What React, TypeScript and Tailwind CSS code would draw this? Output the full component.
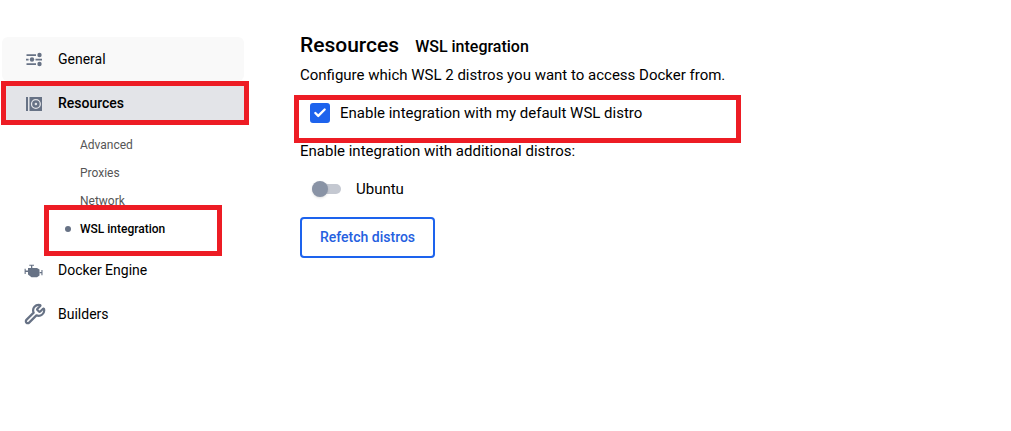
import React, { useState } from 'react';
import { Check, Wrench } from 'lucide-react';

const SlidersIcon = () => (
  <svg className="h-5 w-5" viewBox="0 0 20 20" fill="currentColor" aria-hidden="true">
    <path d="M2.5 5.2h9.5v1.7H2.5zM2 9.7h2.6v1.7H2zM11.5 9.7H18v1.7h-6.5zM2.5 14.2h9.5v1.7H2.5z" />
    <circle cx="15.5" cy="6" r="2.2" />
    <circle cx="8" cy="10.5" r="2.2" />
    <circle cx="15.5" cy="15" r="2.2" />
  </svg>
);

const DiskIcon = () => (
  <svg className="h-5 w-5" viewBox="0 0 20 20" fill="none" aria-hidden="true">
    <path d="M2 4h2v14H2zM5.5 4H18v14H5.5z" fill="currentColor" />
    <circle cx="11.9" cy="11" r="4.4" stroke="#e3e4e8" strokeWidth="1.3" />
    <circle cx="11.9" cy="11" r="1.3" fill="#e3e4e8" />
  </svg>
);

const EngineIcon = () => (
  <svg className="h-5 w-5" viewBox="0 0 20 20" fill="currentColor" aria-hidden="true">
    <path d="M4 8h9l2.5 1.5v6L13 17.2H7.5L4 14.5z" />
    <path d="M5.3 4.7H10v1.1H8.3V8H7V5.8H5.3zM.6 8.7h1.1v5.2H.6zM1.7 10.6H4v1.3H1.7zM17.4 10h1.1v5.2h-1.1zM15.5 12h1.9v1.3h-1.9z" />
  </svg>
);

const subItems = ['Advanced', 'Proxies', 'Network', 'WSL integration'];

const navLink = 'flex h-11 items-center gap-3 pl-[22px] text-[14px] text-black';

const Highlight: React.FC<{ className: string }> = ({ className }) => (
  <span className={`pointer-events-none absolute border-5 border-[#ed1c24] ${className}`} />
);

const Sidebar: React.FC = () => (
  <nav className="w-[244px] shrink-0 pt-0.5 pl-0.5">
    <ul>
      <li>
        <a href="#general" className={`${navLink} rounded-md bg-[#f9f9f9]`}>
          <span className="flex w-[22px] text-[#677285]"><SlidersIcon /></span>
          General
        </a>
      </li>
      <li>
        <div className="relative">
          <a href="#resources" className={`${navLink} bg-[#e3e4e8] font-medium`}>
            <span className="flex w-[22px] text-[#677285]"><DiskIcon /></span>
            Resources
          </a>
          <Highlight className="inset-y-0 -left-px -right-[5px]" />
        </div>
        <ul className="pt-1.5 pb-[5px]">
          {subItems.map((item) => {
            const active = item === 'WSL integration';
            return (
              <li key={item} className="relative">
                <a
                  href="#resources"
                  className={`flex h-7 items-center pl-[63px] text-[12px] ${active ? 'font-medium text-black' : 'text-[#555]'}`}
                >
                  <span className={`mr-[9px] h-1.5 w-1.5 rounded-full ${active ? 'bg-[#677285]' : ''}`} />
                  {item}
                </a>
                {active && <Highlight className="-top-2.5 -bottom-[13px] left-[42px] right-[22px]" />}
              </li>
            );
          })}
        </ul>
      </li>
      <li>
        <a href="#engine" className={navLink}>
          <span className="flex w-[22px] text-[#677285]"><EngineIcon /></span>
          Docker Engine
        </a>
      </li>
      <li>
        <a href="#builders" className={navLink}>
          <span className="flex w-[22px] text-[#677285]"><Wrench size={22} strokeWidth={2.4} /></span>
          Builders
        </a>
      </li>
    </ul>
  </nav>
);

const App: React.FC = () => {
  const [defaultDistro, setDefaultDistro] = useState(true);
  const [ubuntu, setUbuntu] = useState(false);

  return (
    <div className="flex min-h-screen bg-white pt-[35px] font-['Roboto',sans-serif] text-black">
      <Sidebar />

      <main className="min-w-0 flex-1 pl-14 text-[15px] leading-5">
        <div className="flex items-baseline gap-4">
          <h1 className="-mt-1 text-[21px] leading-6 font-medium">Resources</h1>
          <h2 className="text-[16px] leading-6 font-medium">WSL integration</h2>
        </div>
        <p className="mt-1.5">Configure which WSL 2 distros you want to access Docker from.</p>

        <div className="relative mt-[18px] max-w-[435px]">
          <label className="flex items-center gap-2.5 pl-2.5">
            <span className="relative flex">
              <input
                type="checkbox"
                checked={defaultDistro}
                onChange={(e) => setDefaultDistro(e.target.checked)}
                className="h-5 w-5 appearance-none rounded-[3px] border-2 border-[#1d63ed] checked:bg-[#1d63ed]"
              />
              {defaultDistro && (
                <Check className="pointer-events-none absolute inset-0 m-auto h-3.5 w-3.5 text-white" strokeWidth={4} />
              )}
            </span>
            Enable integration with my default WSL distro
          </label>
          <Highlight className="-top-2 -bottom-5 -left-1.5 -right-1.5" />
        </div>

        <p className="mt-[18px]">Enable integration with additional distros:</p>

        <label className="mt-[18px] flex items-center gap-[15px] pl-3">
          <span className="relative flex h-4 w-[29px] items-center">
            <input
              type="checkbox"
              role="switch"
              checked={ubuntu}
              onChange={(e) => setUbuntu(e.target.checked)}
              className="peer h-2.5 w-full appearance-none rounded-full bg-[#c4c8d1] checked:bg-[#8fb1f6]"
            />
            <span className="pointer-events-none absolute left-0 h-4 w-4 rounded-full bg-[#8993a5] shadow-sm peer-checked:right-0 peer-checked:left-auto peer-checked:bg-[#1d63ed]" />
          </span>
          Ubuntu
        </label>

        <button
          type="button"
          className="mt-[18px] rounded border-2 border-[#1d63ed] px-[18px] py-2 text-[14px] leading-[21px] font-medium text-[#2560e0]"
        >
          Refetch distros
        </button>
      </main>
    </div>
  );
};

export default App;
